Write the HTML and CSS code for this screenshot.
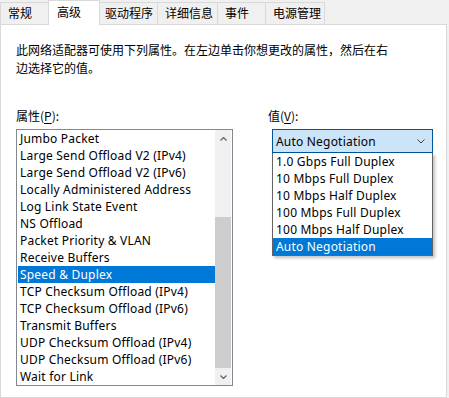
FILE: index.html
```html
<!DOCTYPE html>
<html lang="zh-CN">
<head>
<meta charset="utf-8">
<link rel="stylesheet" href="styles.css">
</head>
<body>
<div class="tabs">
  <div class="tab t1">常规</div>
  <div class="tab t2 active">高级</div>
  <div class="tab t3">驱动程序</div>
  <div class="tab t4">详细信息</div>
  <div class="tab t5">事件</div>
  <div class="tab t6">电源管理</div>
</div>
<div class="panel">
  <p class="desc">此网络适配器可使用下列属性。在左边单击你想更改的属性，然后在右<br>边选择它的值。</p>
  <div class="cols">
    <div class="col-left">
      <div class="label">属性(<u>P</u>):</div>
      <div class="listbox">
        <ul class="items">
          <li>Jumbo Packet</li>
          <li>Large Send Offload V2 (IPv4)</li>
          <li>Large Send Offload V2 (IPv6)</li>
          <li>Locally Administered Address</li>
          <li>Log Link State Event</li>
          <li>NS Offload</li>
          <li>Packet Priority &amp; VLAN</li>
          <li>Receive Buffers</li>
          <li class="sel">Speed &amp; Duplex</li>
          <li>TCP Checksum Offload (IPv4)</li>
          <li>TCP Checksum Offload (IPv6)</li>
          <li>Transmit Buffers</li>
          <li>UDP Checksum Offload (IPv4)</li>
          <li>UDP Checksum Offload (IPv6)</li>
          <li>Wait for Link</li>
        </ul>
        <div class="scrollbar">
          <div class="arrow"><svg width="7" height="4" viewBox="0 0 7 4"><polyline points="0.5,3.5 3.5,0.5 6.5,3.5" fill="none" stroke="#606060" stroke-width="1.2"/></svg></div>
          <div class="track"><div class="thumb"></div></div>
          <div class="arrow"><svg width="7" height="4" viewBox="0 0 7 4"><polyline points="0.5,0.5 3.5,3.5 6.5,0.5" fill="none" stroke="#606060" stroke-width="1.2"/></svg></div>
        </div>
      </div>
    </div>
    <div class="col-right">
      <div class="label">值(<u>V</u>):</div>
      <div class="combo-wrap">
        <div class="combo">
          <span>Auto Negotiation</span>
          <svg class="chev" width="8" height="5" viewBox="0 0 8 5"><polyline points="0.5,0.5 4,4 7.5,0.5" fill="none" stroke="#404040" stroke-width="1"/></svg>
        </div>
        <ul class="dropdown">
          <li>1.0 Gbps Full Duplex</li>
          <li>10 Mbps Full Duplex</li>
          <li>10 Mbps Half Duplex</li>
          <li>100 Mbps Full Duplex</li>
          <li>100 Mbps Half Duplex</li>
          <li class="sel">Auto Negotiation</li>
        </ul>
      </div>
    </div>
  </div>
</div>
</body>
</html>
```
FILE: styles.css
```css
* { box-sizing: border-box; }
html, body { margin: 0; padding: 0; }
body {
  width: 449px;
  height: 398px;
  overflow: hidden;
  background: #f0f0f0;
  font-family: "Noto Sans", "Noto Sans CJK SC", sans-serif;
  font-size: 12px;
  color: #000;
}
.tabs {
  display: flex;
  align-items: flex-end;
  height: 24px;
  position: relative;
  z-index: 2;
}
.tab {
  height: 22px;
  line-height: 20px;
  border: 1px solid #d9d9d9;
  border-bottom: none;
  background: #f0f0f0;
  margin-right: -1px;
  padding-left: 7px;
  font-family: "Noto Sans CJK SC", sans-serif;
  white-space: nowrap;
}
.tab.active {
  height: 25px;
  margin-bottom: -1px;
  background: #fff;
  line-height: 22px;
  padding-left: 8px;
}
.t1 { width: 49px; }
.t2 { width: 52px; }
.t3 { width: 59px; padding-left: 5px; }
.t4 { width: 61px; }
.t5 { width: 49px; }
.t6 { width: 60px; }
.panel {
  width: 447px;
  height: 374px;
  background: #fff;
  border: 1px solid #d9d9d9;
  padding: 16px 0 0 15px;
}
.desc {
  margin: 0;
  line-height: 18px;
  font-family: "Noto Sans CJK SC", sans-serif;
}
.cols {
  display: flex;
  margin-top: 30px;
}
.col-left { width: 217px; }
.col-right { margin-left: 35px; }
.label {
  height: 18px;
  line-height: 18px;
  margin-bottom: 4px;
  font-family: "Noto Sans CJK SC", sans-serif;
}
.label u { text-decoration: underline; text-underline-offset: 2px; }
.listbox {
  display: flex;
  width: 217px;
  height: 257px;
  border: 1px solid #828790;
  padding: 0 1px;
  background: #fff;
}
.items, .dropdown {
  list-style: none;
  margin: 0;
  padding: 0;
}
.items { width: 197px; }
.items li, .dropdown li {
  height: 17px;
  line-height: 18px;
  padding-left: 2px;
  white-space: nowrap;
  letter-spacing: 0.2px;
}
.sel { background: #0078d7; color: #fff; }
.scrollbar {
  width: 16px;
  display: flex;
  flex-direction: column;
  background: #f0f0f0;
}
.arrow {
  height: 17px;
  display: flex;
  align-items: center;
  justify-content: center;
}
.track {
  flex: 1;
  padding-top: 70px;
}
.thumb {
  height: 151px;
  background: #cdcdcd;
}
.combo-wrap { position: relative; margin-left: 4px; }
.combo {
  width: 161px;
  height: 24px;
  border: 1px solid #005499;
  background: #cce4f7;
  display: flex;
  align-items: center;
  justify-content: space-between;
  padding: 1px 7px 0 3px;
  letter-spacing: 0.2px;
}
.dropdown {
  position: absolute;
  left: 0;
  top: 24px;
  width: 161px;
  border: 1px solid #646464;
  border-top: none;
  background: #fff;
  box-shadow: 2px 2px 3px rgba(0,0,0,0.25);
}
.dropdown li { padding-left: 3px; }
```
